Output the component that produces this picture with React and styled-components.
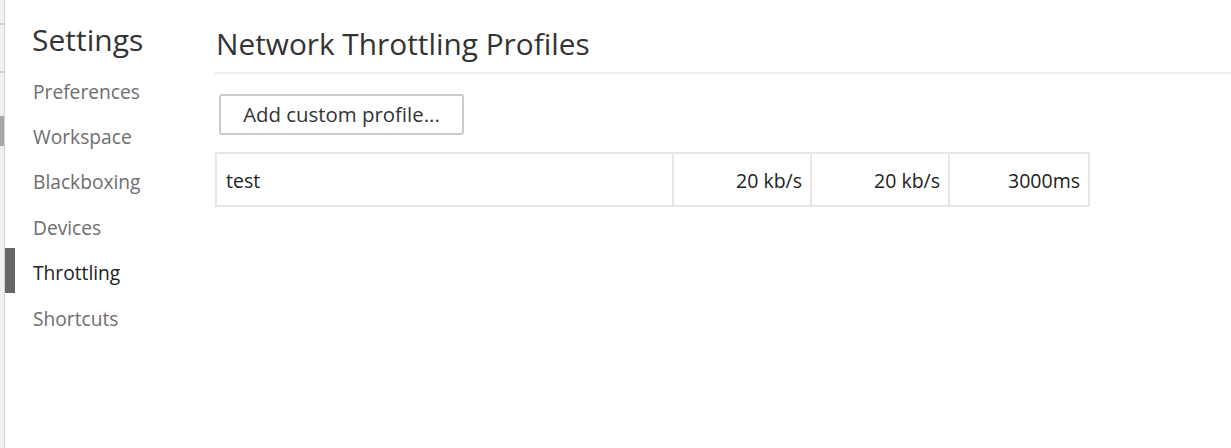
import React from "react";
import styled, { createGlobalStyle } from "styled-components";

const Global = createGlobalStyle`
  html, body { margin: 0; padding: 0; background: #fff; }
  body { font-family: "Open Sans", "Noto Sans", sans-serif; overflow: hidden; }
`;

const Page = styled.div`
  display: flex;
  width: 1231px;
  height: 448px;
  background: #fff;
`;

const EdgeStrip = styled.div`
  width: 4px;
  flex: none;
  background: #f0f0f0;
  border-right: 1px solid #d4d4d4;
  display: flex;
  flex-direction: column;
`;

const EdgeMark = styled.div`
  height: ${(p) => p.h}px;
  margin-top: ${(p) => p.mt}px;
  background: ${(p) => p.c};
`;

const Sidebar = styled.nav`
  width: 210px;
  flex: none;
  display: flex;
  flex-direction: column;
`;

const SidebarTitle = styled.h1`
  margin: 0;
  height: 66px;
  box-sizing: border-box;
  padding: 20px 0 0 27px;
  font-size: 30px;
  font-weight: 400;
  line-height: 40px;
  color: #333;
`;

const NavItem = styled.div`
  position: relative;
  height: 45.4px;
  box-sizing: border-box;
  display: flex;
  align-items: center;
  padding: 5px 0 0 28px;
  font-size: 19.2px;
  color: ${(p) => (p.$active ? "#222" : "#6e6e6e")};
  &::before {
    content: "";
    display: ${(p) => (p.$active ? "block" : "none")};
    position: absolute;
    left: 0;
    top: 0;
    bottom: 0;
    width: 10px;
    background: #666;
  }
`;

const Main = styled.main`
  flex: 1;
  display: flex;
  flex-direction: column;
  min-width: 0;
`;

const Header = styled.h2`
  margin: 0;
  height: 74px;
  box-sizing: border-box;
  padding: 24px 0 0 1px;
  font-size: 29.8px;
  font-weight: 400;
  line-height: 40px;
  color: #333;
  border-bottom: 2px solid #ececec;
`;

const Body = styled.div`
  padding: 20px 0 0 0;
  display: flex;
  flex-direction: column;
  align-items: flex-start;
`;

const Button = styled.button`
  margin-left: 4px;
  width: 245px;
  height: 41px;
  box-sizing: border-box;
  border: 2px solid #cbcbcb;
  border-radius: 3px;
  background: #fff;
  font-family: inherit;
  font-size: 20.4px;
  font-weight: 500;
  color: #333;
  padding: 0 0 2px 0;
  display: flex;
  align-items: center;
  justify-content: center;
`;

const Table = styled.div`
  margin-top: 17px;
  display: grid;
  grid-template-columns: 455px 138px 138px 140px;
  border: 2px solid #e6e6e6;
  box-sizing: border-box;
`;

const Cell = styled.div`
  height: 51px;
  display: flex;
  align-items: center;
  justify-content: ${(p) => (p.$right ? "flex-end" : "flex-start")};
  padding: 1px 8px 0 9px;
  font-size: 19.5px;
  color: #222;
  border-left: ${(p) => (p.$first ? "none" : "2px solid #e6e6e6")};
  box-sizing: border-box;
`;

const navItems = ["Preferences", "Workspace", "Blackboxing", "Devices", "Throttling", "Shortcuts"];

export default function App() {
  return (
    <>
      <Global />
      <Page>
        <EdgeStrip>
          <EdgeMark mt={23} h={2} c="#cfcfcf" />
          <EdgeMark mt={46} h={2} c="#cfcfcf" />
          <EdgeMark mt={43} h={30} c="#a8a8a8" />
        </EdgeStrip>
        <Sidebar>
          <SidebarTitle>Settings</SidebarTitle>
          {navItems.map((n) => (
            <NavItem key={n} $active={n === "Throttling"}>
              {n}
            </NavItem>
          ))}
        </Sidebar>
        <Main>
          <Header>Network Throttling Profiles</Header>
          <Body>
            <Button>Add custom profile...</Button>
            <Table>
              <Cell $first>test</Cell>
              <Cell $right>20 kb/s</Cell>
              <Cell $right>20 kb/s</Cell>
              <Cell $right>3000ms</Cell>
            </Table>
          </Body>
        </Main>
      </Page>
    </>
  );
}
